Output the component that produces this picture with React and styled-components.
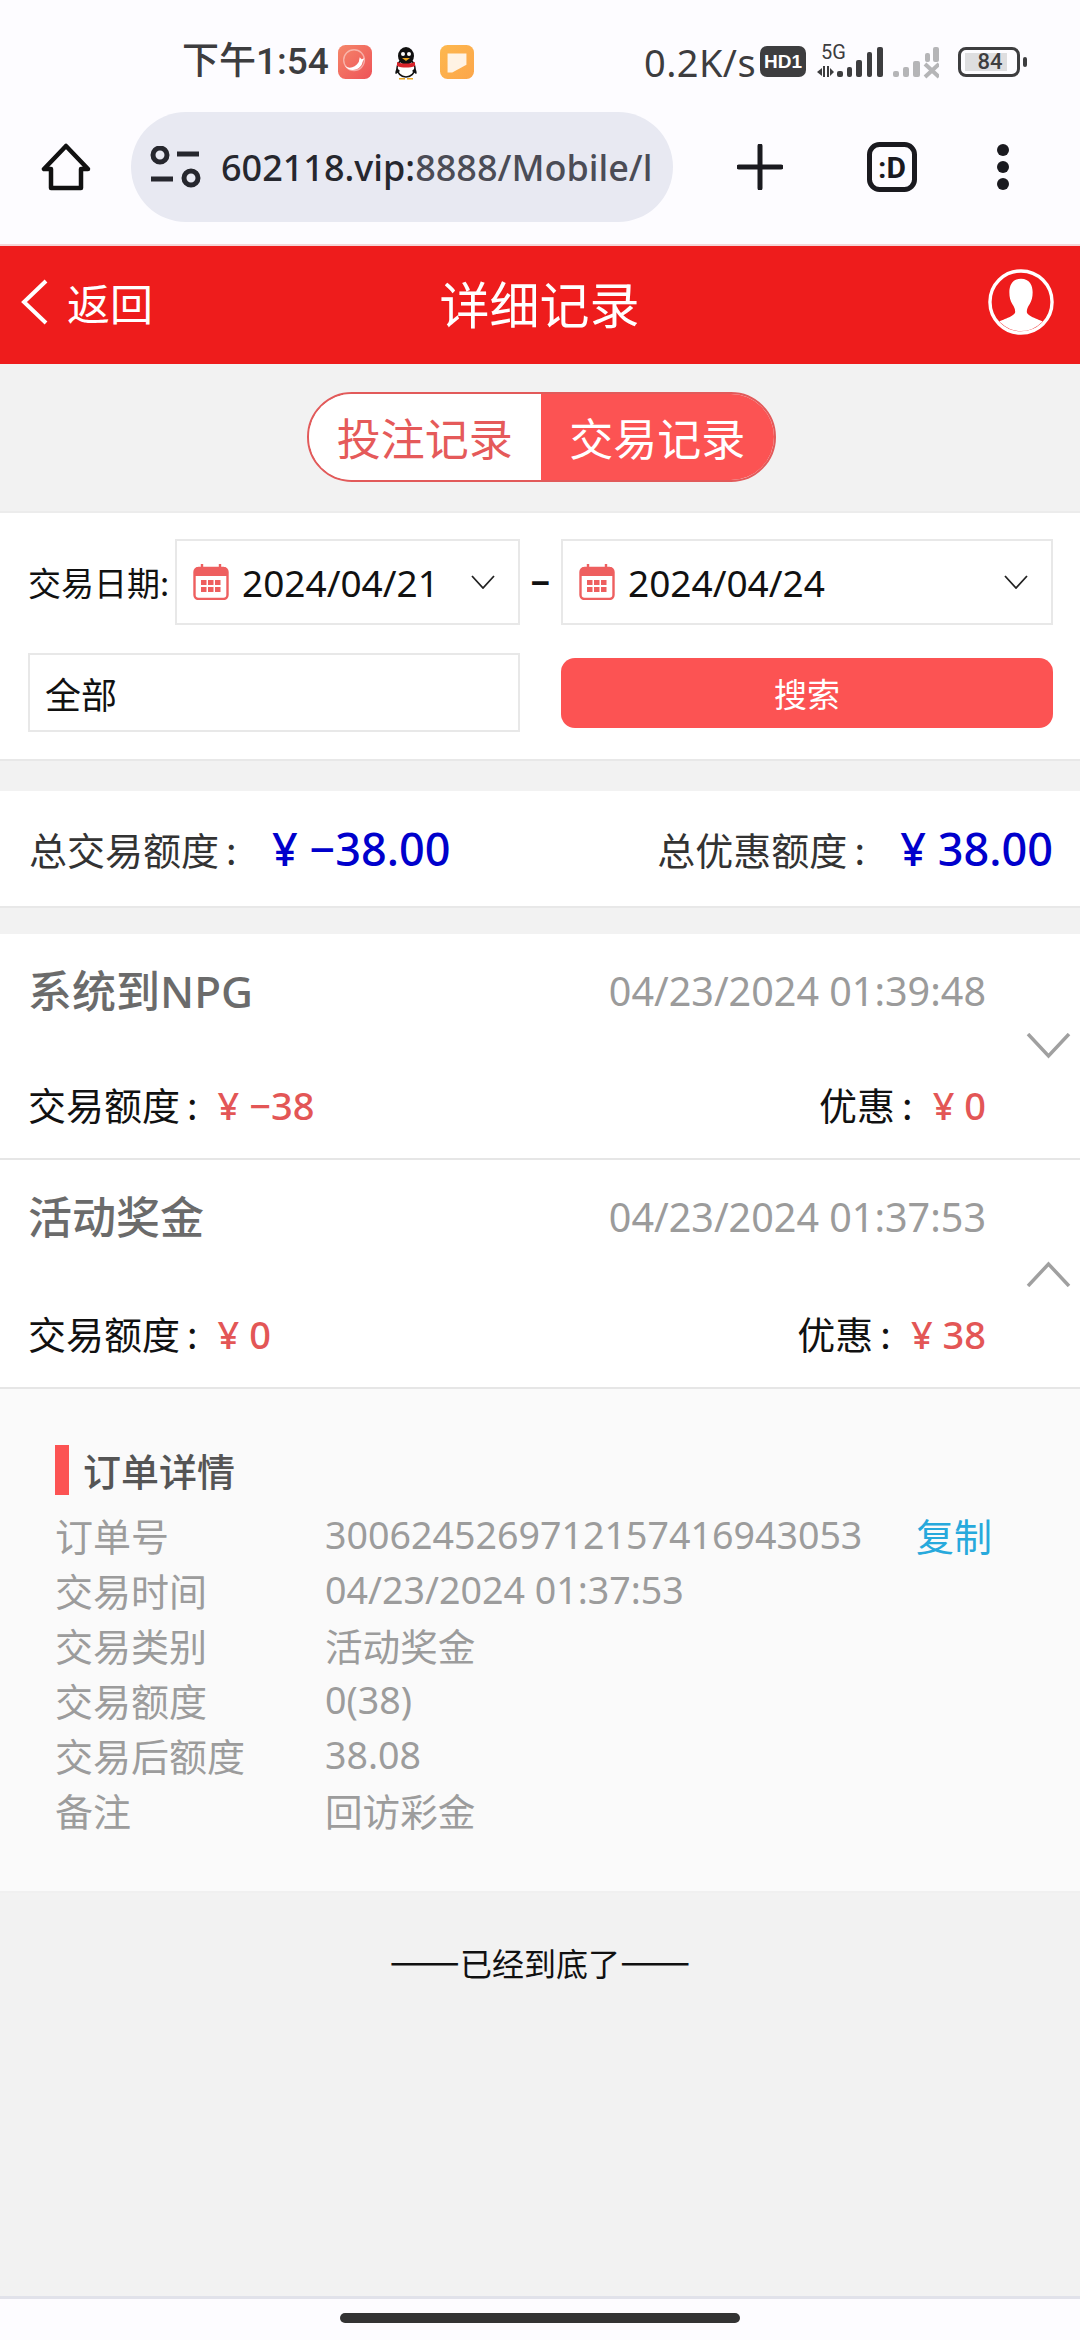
import React from "react";
import styled, { createGlobalStyle } from "styled-components";

const GlobalStyle = createGlobalStyle`
  html, body { margin: 0; padding: 0; background: #f2f2f2; }
  body { font-family: "Noto Sans", "Noto Sans CJK SC", sans-serif; }
  * { box-sizing: border-box; }
`;

const cjk = `"Noto Sans CJK SC", "Noto Sans", sans-serif`;
const latin = `Roboto, "Noto Sans CJK SC", sans-serif`;

const Page = styled.div`
  width: 1080px;
  height: 2340px;
  display: flex;
  flex-direction: column;
  background: #f2f2f2;
  overflow: hidden;
`;

/* phone chrome */
const Chrome = styled.div`
  height: 246px;
  background: #fdfcff;
  border-bottom: 2px solid #f6d5d7;
  display: flex;
  flex-direction: column;
`;
const StatusBar = styled.div`
  height: 112px;
  padding: 42px 53px 0 182px;
  display: flex;
  align-items: flex-start;
  color: #3d3d3f;
`;
const Clock = styled.span`
  font-family: ${latin};
  font-size: 37px;
  font-weight: 500;
  line-height: 40px;
  width: 156px;
  white-space: nowrap;
`;
const AppIcons = styled.div`
  display: flex;
  align-items: center;
  gap: 18px;
  height: 40px;
  flex: 1;
`;
const Speed = styled.span`
  font-family: "Noto Sans", sans-serif;
  font-size: 38px;
  line-height: 40px;
  letter-spacing: 0.4px;
  white-space: nowrap;
  margin-right: 4px;
`;
const Hd = styled.span`
  width: 46px;
  height: 31px;
  border-radius: 7px;
  background: #3d3d3f;
  color: #fff;
  font: 700 19px/31px "Liberation Sans", sans-serif;
  text-align: center;
  margin: 4px 11px 0 0;
`;
const StatusIcons = styled.div`
  display: flex;
  align-items: flex-end;
  gap: 8px;
  margin-top: -8px;
`;
const Battery = styled.div`
  width: 62px;
  height: 30px;
  border: 3px solid #3d3d3f;
  border-radius: 8px;
  margin: 5px 7px 0 19px;
  padding: 3px 0 3px 4px;
  position: relative;
  &::after {
    content: "";
    position: absolute;
    right: -10px;
    top: 7px;
    width: 4px;
    height: 10px;
    background: #3d3d3f;
    border-radius: 2px;
  }
`;
const BatteryFill = styled.div`
  width: 42px;
  height: 18px;
  background: #dedee0;
  font: 500 22px/18px Roboto, sans-serif;
  color: #3d3d3f;
  text-align: center;
  padding-left: 8px;
`;
const BrowserBar = styled.div`
  height: 110px;
  display: flex;
  align-items: center;
`;
const IconSlot = styled.div`
  width: ${(p) => p.$w}px;
  display: flex;
  justify-content: center;
  align-items: center;
  flex-shrink: 0;
`;
const UrlPill = styled.div`
  width: 542px;
  height: 110px;
  border-radius: 55px;
  background: #e8e9f2;
  display: flex;
  align-items: center;
  padding-left: 19px;
  gap: 19px;
  overflow: hidden;
`;
const UrlText = styled.span`
  font-family: "Noto Sans", sans-serif;
  font-size: 36px;
  font-weight: 500;
  color: #4b4c56;
  white-space: nowrap;
  width: 432px;
  overflow: hidden;
`;
const UrlHost = styled.span`
  color: #26272e;
`;

/* page header */
const Header = styled.header`
  height: 118px;
  background: #ee1c1c;
  color: #fff;
  display: grid;
  grid-template-columns: 1fr auto 1fr;
  align-items: center;
  padding: 0 26px 6px 21px;
`;
const Back = styled.div`
  display: flex;
  align-items: center;
  gap: 19px;
  font-family: ${cjk};
  font-size: 43px;
  line-height: 1;
`;
const Title = styled.h1`
  margin: 0;
  font-family: ${cjk};
  font-size: 50px;
  font-weight: 400;
  line-height: 1;
  position: relative;
  left: 2px;
`;
const Avatar = styled.div`
  justify-self: end;
  display: flex;
`;

/* tabs */
const TabWrap = styled.div`
  height: 147px;
  display: flex;
  justify-content: center;
  padding-top: 28px;
`;
const Tabs = styled.div`
  width: 469px;
  height: 90px;
  border-radius: 45px;
  border: 2px solid #e25a5a;
  overflow: hidden;
  display: flex;
  position: relative;
  left: 1px;
`;
const Tab = styled.div`
  flex: 1;
  background: ${(p) => (p.$active ? "#fc5353" : "#fff")};
  color: ${(p) => (p.$active ? "#fff" : "#e55a5a")};
  font-family: ${cjk};
  font-size: 44px;
  display: flex;
  align-items: center;
  justify-content: center;
`;

/* filter */
const Panel = styled.section`
  background: #fff;
  border-top: 2px solid #ececec;
  border-bottom: 2px solid #e8e8e8;
`;
const FilterPanel = styled(Panel)`
  height: 250px;
  padding: 26px 27px 0 28px;
  display: flex;
  flex-direction: column;
  gap: 28px;
`;
const FilterRow = styled.div`
  display: flex;
  align-items: center;
`;
const DateLabel = styled.span`
  width: 147px;
  font-family: ${cjk};
  font-size: 33px;
  color: #111;
  white-space: nowrap;
`;
const DateField = styled.div`
  width: ${(p) => p.$w}px;
  height: 86px;
  border: 2px solid #e8e8e8;
  display: flex;
  align-items: center;
  padding: 0 23px 0 16px;
  gap: 14px;
  color: #111;
`;
const DateText = styled.span`
  font-family: "Noto Sans", sans-serif;
  font-size: 37px;
  flex: 1;
  margin-left: -1px;
`;
const Dash = styled.span`
  width: 41px;
  text-align: center;
  font: 700 34px/1 "Noto Sans", sans-serif;
  color: #111;
`;
const SelectBox = styled.div`
  width: 492px;
  height: 79px;
  border: 2px solid #e8e8e8;
  display: flex;
  align-items: center;
  padding-left: 15px;
  font-family: ${cjk};
  font-size: 36px;
  color: #111;
`;
const SearchButton = styled.div`
  width: 492px;
  height: 70px;
  margin-left: 41px;
  border-radius: 14px;
  background: #fc5353;
  color: #fff;
  font-family: ${cjk};
  font-size: 33px;
  display: flex;
  align-items: center;
  justify-content: center;
`;

/* totals */
const Totals = styled(Panel)`
  height: 117px;
  margin-top: 30px;
  padding: 0 27px 0 29px;
  display: flex;
  align-items: center;
  justify-content: space-between;
  border-top: 0;
`;
const TotalGroup = styled.div`
  display: flex;
  align-items: center;
`;
const TotalLabel = styled.span`
  font-family: ${cjk};
  font-size: 38px;
  color: #333;
  width: 243px;
  white-space: nowrap;
`;
const Colon = styled.span`
  margin-left: 7px;
`;
const TotalValue = styled.span`
  font-family: "Noto Sans", sans-serif;
  font-size: 45px;
  font-weight: 500;
  color: #0000cc;
  white-space: nowrap;
`;

/* list */
const List = styled.div`
  margin-top: 26px;
  background: #fff;
`;
const Item = styled.div`
  height: ${(p) => p.$h}px;
  border-bottom: 2px solid #e6e6e6;
  display: flex;
  align-items: center;
`;
const ItemMain = styled.div`
  width: 986px;
  height: 100%;
  padding: 27px 0 26px 28px;
  display: flex;
  flex-direction: column;
  justify-content: space-between;
`;
const ItemRow = styled.div`
  display: flex;
  align-items: center;
  justify-content: space-between;
`;
const ItemName = styled.span`
  font-family: "Noto Sans", "Noto Sans CJK SC", sans-serif;
  font-size: 44px;
  font-weight: 500;
  line-height: 60px;
  color: #6b6b6b;
`;
const ItemTime = styled.span`
  font-family: "Noto Sans", sans-serif;
  font-size: 39.5px;
  color: #9b9b9b;
`;
const Amount = styled.span`
  font-family: ${cjk};
  font-size: 38px;
  line-height: 54px;
  color: #111;
`;
const Money = styled.span`
  font-family: "Noto Sans", sans-serif;
  font-weight: 500;
  color: #e35656;
  margin-left: 20px;
`;
const ItemArrow = styled.div`
  flex: 1;
  display: flex;
  justify-content: flex-end;
  padding-right: 9px;
`;

/* details */
const Detail = styled.section`
  height: 504px;
  background: #fafafa;
  border-bottom: 2px solid #f0f0f0;
  padding: 56px 88px 0 55px;
`;
const DetailTitle = styled.h2`
  margin: 0 0 12px;
  height: 50px;
  border-left: 14px solid #fc5353;
  padding-left: 14px;
  font-family: ${cjk};
  font-size: 38px;
  font-weight: 500;
  line-height: 50px;
  color: #555;
`;
const DetailRow = styled.div`
  height: 55px;
  display: flex;
  align-items: center;
  color: #9c9c9c;
`;
const DetailKey = styled.span`
  width: 270px;
  font-family: ${cjk};
  font-size: 38px;
`;
const DetailValue = styled.span`
  flex: 1;
  font-family: "Noto Sans", "Noto Sans CJK SC", sans-serif;
  font-size: 37.6px;
  white-space: nowrap;
`;
const Copy = styled.span`
  font-family: ${cjk};
  font-size: 38px;
  color: #27a9dc;
`;

const EndNote = styled.div`
  flex: 1;
  padding-top: 44px;
  text-align: center;
  font-family: ${cjk};
  font-size: 32px;
  line-height: 50px;
  color: #111;
`;
const EndDash = styled.span`
  font-size: 42px;
  line-height: 0;
`;
const NavBar = styled.div`
  height: 44px;
  background: #fdfcff;
  border-top: 3px solid #e1e2ea;
  display: flex;
  justify-content: center;
  padding-top: 14px;
`;
const HomeIndicator = styled.div`
  width: 400px;
  height: 10px;
  border-radius: 5px;
  background: #333;
`;

const WhaleIcon = () => (
  <svg width="34" height="34" viewBox="0 0 36 36">
    <defs>
      <linearGradient id="wh" x1="0" y1="0" x2="1" y2="1">
        <stop offset="0" stopColor="#f5876a" />
        <stop offset="1" stopColor="#ee5258" />
      </linearGradient>
    </defs>
    <rect width="36" height="36" rx="8" fill="url(#wh)" />
    <circle cx="17" cy="16" r="11" fill="none" stroke="#fff" strokeOpacity=".45" strokeWidth="1.4" />
    <path d="M7 22c5 4 11 2 15-4l1-5 2 2 3-1-2 4c-1 8-13 12-19 4z" fill="#fff" />
  </svg>
);
const QqIcon = () => (
  <svg width="32" height="36" viewBox="0 0 30 36">
    <ellipse cx="15" cy="24" rx="9" ry="9" fill="#fff" stroke="#111" strokeWidth="1.5" />
    <path d="M6 24c-2 3-2 6-1 6l4-3zM24 24c2 3 2 6 1 6l-4-3z" fill="#111" />
    <ellipse cx="15" cy="12" rx="8" ry="9" fill="#111" />
    <circle cx="12" cy="10" r="2" fill="#fff" />
    <circle cx="18" cy="10" r="2" fill="#fff" />
    <path d="M11 14h8l-4 3z" fill="#f0a81e" />
    <path d="M6 18c5 2 13 2 18 0v4c-5 2-13 2-18 0z" fill="#d8232a" />
    <path d="M8 34h6v1.5H8zM16 34h6v1.5h-6z" fill="#e9a61e" />
  </svg>
);
const NoteIcon = () => (
  <svg width="34" height="34" viewBox="0 0 36 36">
    <defs>
      <linearGradient id="nt" x1="0" y1="0" x2="1" y2="1">
        <stop offset="0" stopColor="#fdb84f" />
        <stop offset="1" stopColor="#fca64a" />
      </linearGradient>
    </defs>
    <rect width="36" height="36" rx="8" fill="url(#nt)" />
    <path d="M8 9h20v12L13 29H8z" fill="#fff" fillOpacity=".85" />
  </svg>
);
const MobileSignal = () => (
  <svg width="68" height="46" viewBox="0 -10 68 46" fill="#3d3d3f">
    <text x="4" y="15" fontSize="20" fontFamily="Roboto, sans-serif">5G</text>
    <path d="M0 28l5-4v8zM6 22h2v11H6zM10 22h2v11h-2zM13 24l4 4-4 4z" />
    <rect x="20" y="27" width="6" height="6" rx="2" />
    <rect x="30" y="23" width="5" height="10" rx="2" />
    <rect x="39" y="16" width="6" height="17" rx="2" />
    <rect x="50" y="8" width="5" height="25" rx="2" />
    <rect x="60" y="3" width="6" height="30" rx="2" />
  </svg>
);
const NoSignal = () => (
  <svg width="46" height="36" viewBox="0 0 46 36" fill="#b5b5b7">
    <rect x="0" y="27" width="6" height="6" rx="2" />
    <rect x="10" y="23" width="6" height="10" rx="2" />
    <rect x="20" y="17" width="7" height="16" rx="2" />
    <rect x="32" y="9" width="5" height="9" rx="2" />
    <rect x="40" y="3" width="6" height="15" rx="2" />
    <path d="M32 20l14 13M46 20L32 33" stroke="#b5b5b7" strokeWidth="4" />
  </svg>
);
const HomeIcon = () => (
  <svg width="50" height="50" viewBox="0 0 50 50" fill="none" stroke="#111" strokeWidth="4.5" strokeLinejoin="round">
    <path d="M25 4L3 27h7v19h30V27h7z" />
  </svg>
);
const TuneIcon = () => (
  <svg width="52" height="42" viewBox="0 0 52 42" fill="none" stroke="#26272e" strokeWidth="5">
    <circle cx="10" cy="9" r="7" />
    <path d="M27 8h22M1 33h22" />
    <circle cx="41" cy="32" r="7" />
  </svg>
);
const PlusIcon = () => (
  <svg width="46" height="46" viewBox="0 0 46 46" stroke="#1a1a1f" strokeWidth="5" strokeLinecap="round">
    <path d="M23 2v42M2 23h42" />
  </svg>
);
const TabCountIcon = () => (
  <svg width="50" height="50" viewBox="0 0 50 50">
    <rect x="2.5" y="2.5" width="45" height="45" rx="10" fill="none" stroke="#1a1a1f" strokeWidth="5" />
    <text x="25" y="36" textAnchor="middle" fontSize="30" fontWeight="700" fontFamily="Roboto, sans-serif" fill="#1a1a1f">:D</text>
  </svg>
);
const MoreIcon = () => (
  <svg width="14" height="46" viewBox="0 0 14 46" fill="#1a1a1f">
    <circle cx="7" cy="6" r="6" />
    <circle cx="7" cy="23" r="6" />
    <circle cx="7" cy="40" r="6" />
  </svg>
);
const BackIcon = () => (
  <svg width="27" height="46" viewBox="0 0 27 46" fill="none" stroke="#fff" strokeWidth="4">
    <path d="M25 2L3 23l22 21" />
  </svg>
);
const UserIcon = () => (
  <svg width="66" height="66" viewBox="0 0 68 68">
    <defs>
      <clipPath id="avatar-clip">
        <circle cx="34" cy="34" r="30" />
      </clipPath>
    </defs>
    <circle cx="34" cy="34" r="32" fill="none" stroke="#fff" strokeWidth="3.5" />
    <path
      clipPath="url(#avatar-clip)"
      d="M34 10c-9 0-12 7-12 14 0 5 1 9 3 12 2 3 3 5 3 8 0 5-14 8-18 11 0 6 8 13 24 13s24-7 24-13c-4-3-18-6-18-11 0-3 1-5 3-8 2-3 3-7 3-12 0-7-3-14-12-14z"
      fill="#fff"
    />
  </svg>
);
const CalendarIcon = () => (
  <svg width="36" height="36" viewBox="0 0 36 36">
    <rect x="1.5" y="4" width="33" height="31" rx="4" fill="#fff" stroke="#ee5f5f" strokeWidth="2.4" />
    <path d="M2 6a3 3 0 0 1 3-3h26a3 3 0 0 1 3 3v6H2z" fill="#ee5f5f" />
    <path d="M9 0v7M27 0v7" stroke="#ee5f5f" strokeWidth="2.4" />
    <g fill="#ee5f5f">
      {[8, 15, 22].map((x) =>
        [16, 23].map((y) => <rect key={`${x}-${y}`} x={x} y={y} width="5.5" height="5" />)
      )}
    </g>
  </svg>
);
const SmallChevron = () => (
  <svg width="24" height="14" viewBox="0 0 24 14" fill="none" stroke="#222" strokeWidth="1.8">
    <path d="M1 1l11 12L23 1" />
  </svg>
);
const ItemChevron = ({ up }) => (
  <svg width="45" height="26" viewBox="0 0 45 26" fill="none" stroke="#a0a0a0" strokeWidth="3.5">
    <path d={up ? "M2 25L22.5 3 43 25" : "M2 1l20.5 22L43 1"} />
  </svg>
);

const records = [
  { name: "系统到NPG", time: "04/23/2024 01:39:48", amount: "¥ −38", bonus: "¥ 0", h: 226, open: false },
  { name: "活动奖金", time: "04/23/2024 01:37:53", amount: "¥ 0", bonus: "¥ 38", h: 229, open: true },
];

const details = [
  ["订单号", "3006245269712157416943053", true],
  ["交易时间", "04/23/2024 01:37:53"],
  ["交易类别", "活动奖金"],
  ["交易额度", "0(38)"],
  ["交易后额度", "38.08"],
  ["备注", "回访彩金"],
];

export default function App() {
  return (
    <Page>
      <GlobalStyle />
      <Chrome>
        <StatusBar>
          <Clock>下午1:54</Clock>
          <AppIcons>
            <WhaleIcon />
            <QqIcon />
            <NoteIcon />
          </AppIcons>
          <Speed>0.2K/s</Speed>
          <Hd>HD1</Hd>
          <StatusIcons>
            <MobileSignal />
            <NoSignal />
          </StatusIcons>
          <Battery>
            <BatteryFill>84</BatteryFill>
          </Battery>
        </StatusBar>
        <BrowserBar>
          <IconSlot $w={131}>
            <HomeIcon />
          </IconSlot>
          <UrlPill>
            <TuneIcon />
            <UrlText>
              <UrlHost>602118.vip:</UrlHost>8888/Mobile/l
            </UrlText>
          </UrlPill>
          <IconSlot $w={174}>
            <PlusIcon />
          </IconSlot>
          <IconSlot $w={90}>
            <TabCountIcon />
          </IconSlot>
          <IconSlot $w={132}>
            <MoreIcon />
          </IconSlot>
        </BrowserBar>
      </Chrome>

      <Header>
        <Back>
          <BackIcon />
          返回
        </Back>
        <Title>详细记录</Title>
        <Avatar>
          <UserIcon />
        </Avatar>
      </Header>

      <TabWrap>
        <Tabs>
          <Tab>投注记录</Tab>
          <Tab $active>交易记录</Tab>
        </Tabs>
      </TabWrap>

      <FilterPanel>
        <FilterRow>
          <DateLabel>交易日期:</DateLabel>
          <DateField $w={345}>
            <CalendarIcon />
            <DateText>2024/04/21</DateText>
            <SmallChevron />
          </DateField>
          <Dash>−</Dash>
          <DateField $w={492}>
            <CalendarIcon />
            <DateText>2024/04/24</DateText>
            <SmallChevron />
          </DateField>
        </FilterRow>
        <FilterRow>
          <SelectBox>全部</SelectBox>
          <SearchButton>搜索</SearchButton>
        </FilterRow>
      </FilterPanel>

      <Totals>
        <TotalGroup>
          <TotalLabel>
            总交易额度<Colon>:</Colon>
          </TotalLabel>
          <TotalValue>¥ −38.00</TotalValue>
        </TotalGroup>
        <TotalGroup>
          <TotalLabel>
            总优惠额度<Colon>:</Colon>
          </TotalLabel>
          <TotalValue>¥ 38.00</TotalValue>
        </TotalGroup>
      </Totals>

      <List>
        {records.map((r) => (
          <Item key={r.time} $h={r.h}>
            <ItemMain>
              <ItemRow>
                <ItemName>{r.name}</ItemName>
                <ItemTime>{r.time}</ItemTime>
              </ItemRow>
              <ItemRow>
                <Amount>
                  交易额度<Colon>:</Colon>
                  <Money>{r.amount}</Money>
                </Amount>
                <Amount>
                  优惠<Colon>:</Colon>
                  <Money>{r.bonus}</Money>
                </Amount>
              </ItemRow>
            </ItemMain>
            <ItemArrow>
              <ItemChevron up={r.open} />
            </ItemArrow>
          </Item>
        ))}
      </List>

      <Detail>
        <DetailTitle>订单详情</DetailTitle>
        {details.map(([key, value, copy]) => (
          <DetailRow key={key}>
            <DetailKey>{key}</DetailKey>
            <DetailValue>{value}</DetailValue>
            {copy && <Copy>复制</Copy>}
          </DetailRow>
        ))}
      </Detail>

      <EndNote>
        <EndDash>——</EndDash>已经到底了<EndDash>——</EndDash>
      </EndNote>
      <NavBar>
        <HomeIndicator />
      </NavBar>
    </Page>
  );
}
